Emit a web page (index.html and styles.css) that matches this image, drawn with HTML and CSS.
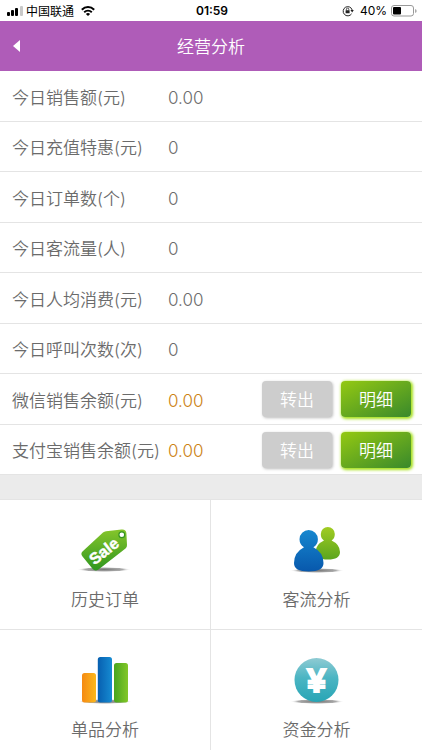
FILE: index.html
```html
<!DOCTYPE html>
<html lang="zh-CN">
<head>
<meta charset="UTF-8">
<meta name="viewport" content="width=device-width, initial-scale=1.0">
<title>经营分析</title>
<link rel="stylesheet" href="styles.css">
</head>
<body>
<!-- 状态栏 -->
<div class="status-bar">
  <div class="status-left">
    <svg class="signal" width="17" height="10" viewBox="0 0 17 10" aria-hidden="true">
      <rect x="0" y="6" width="3" height="4" rx="1"/>
      <rect x="4" y="4" width="3" height="6" rx="1"/>
      <rect x="8" y="2" width="3" height="8" rx="1"/>
      <rect x="13" y="0" width="3" height="10" rx="1" fill="#c8c8c8"/>
    </svg>
    <span>中国联通</span>
    <svg class="wifi" width="14" height="10" viewBox="0 0 14 10" fill="none" stroke="#000" stroke-width="2" aria-hidden="true">
      <path d="M.8 3.7C4.4.2 9.6.2 13.2 3.7"/>
      <path d="M3.2 6.2c2.2-2 5.4-2 7.6 0"/>
      <path d="M7 10 4.9 7.9q2.1-1.7 4.2 0z" fill="#000" stroke="none"/>
    </svg>
  </div>
  <div class="status-time">01:59</div>
  <div class="status-right">
    <svg width="12" height="12" viewBox="0 0 12 12" fill="none" stroke="#222" aria-hidden="true">
      <path d="M9.6 8.8A4.6 4.6 0 1 1 10.2 5"/>
      <path d="M8.4 5h3.4l-1.6 2.4z" fill="#222" stroke="none"/>
      <rect x="3.6" y="5.2" width="4" height="3.1" rx=".4" fill="#222" stroke="none"/>
      <path d="M4.4 5.4V4.3a1.2 1.2 0 0 1 2.4 0v1.1" stroke-width=".8"/>
    </svg>
    <span>40%</span>
    <svg width="26" height="12" viewBox="0 0 26 12" aria-hidden="true">
      <rect x=".5" y=".5" width="22" height="10.5" rx="2.5" fill="#fff" stroke="#999"/>
      <rect x="2" y="2" width="8" height="7.5" rx="1"/>
      <path d="M24.2 4v4q1.4-.6 1.4-2t-1.4-2z" fill="#999"/>
    </svg>
  </div>
</div>

<header class="title-bar">
  <a class="back" href="#" aria-label="返回">
    <svg width="7" height="12" viewBox="0 0 7 12" fill="#fff" aria-hidden="true"><path d="M7 0v12L0 6z"/></svg>
  </a>
  <h1>经营分析</h1>
</header>

<main>
  <!-- 今日数据 -->
  <table class="stats">
    <tbody>
      <tr><th scope="row">今日销售额(元)</th><td colspan="2">0.00</td></tr>
      <tr><th scope="row">今日充值特惠(元)</th><td colspan="2">0</td></tr>
      <tr><th scope="row">今日订单数(个)</th><td colspan="2">0</td></tr>
      <tr><th scope="row">今日客流量(人)</th><td colspan="2">0</td></tr>
      <tr><th scope="row">今日人均消费(元)</th><td colspan="2">0.00</td></tr>
      <tr><th scope="row">今日呼叫次数(次)</th><td colspan="2">0</td></tr>
      <tr>
        <th scope="row">微信销售余额(元)</th>
        <td class="balance">0.00</td>
        <td class="actions"><div class="btn-group"><button class="btn btn-out" type="button">转出</button><button class="btn btn-detail" type="button">明细</button></div></td>
      </tr>
      <tr>
        <th scope="row">支付宝销售余额(元)</th>
        <td class="balance">0.00</td>
        <td class="actions"><div class="btn-group"><button class="btn btn-out" type="button">转出</button><button class="btn btn-detail" type="button">明细</button></div></td>
      </tr>
    </tbody>
  </table>

  <!-- 功能入口 -->
  <nav class="menu">
    <a class="menu-item" href="#">
      <svg width="54" height="48" viewBox="0 0 54 48" aria-hidden="true">
        <defs>
          <linearGradient id="tag" x1="0" y1="0" x2="0" y2="1"><stop offset="0" stop-color="#85c52b"/><stop offset="1" stop-color="#2f961f"/></linearGradient>
          <radialGradient id="shadow"><stop offset="0" stop-color="#777"/><stop offset=".7" stop-color="#aaa"/><stop offset="1" stop-color="#fff" stop-opacity="0"/></radialGradient>
        </defs>
        <ellipse cx="26" cy="42.5" rx="27" ry="2.5" fill="url(#shadow)"/>
        <path d="M28 4.200 43.500 2.500q4.500-.4 4.900 3.700L49 18q.1 2-1.500 3.500L20.500 42.500q-3.500 2.400-6-.8L4.500 29.500q-2.500-3 .5-5.500L25 5.500q1.400-1.100 3-1.300z" fill="url(#tag)"/>
        <circle cx="43.800" cy="7.800" r="2.900" fill="#fff" stroke="#34951f" stroke-width="1.200"/>
        <text class="sale" x="26" y="29.500" text-anchor="middle" transform="rotate(-38 26 24)">Sale</text>
      </svg>
      <span>历史订单</span>
    </a>
    <a class="menu-item" href="#">
      <svg width="54" height="48" viewBox="0 0 54 48" aria-hidden="true">
        <defs>
          <linearGradient id="blue" x1="0" y1="0" x2="0" y2="1"><stop offset="0" stop-color="#1687cf"/><stop offset="1" stop-color="#0858ac"/></linearGradient>
          <linearGradient id="lime" x1="0" y1="0" x2="0" y2="1"><stop offset="0" stop-color="#a1cc22"/><stop offset="1" stop-color="#5ba51e"/></linearGradient>
        </defs>
        <ellipse cx="27" cy="43.500" rx="27" ry="2.500" fill="url(#shadow)"/>
        <path d="M34 13.500q-3.200-2-3.200-6.500a7 7 0 0 1 14 0q0 4.500-3.200 6.500 8.400 4 8.400 11.500 0 7.500-12.200 7.500T25.600 25q0-7.500 8.400-11.500z" fill="url(#lime)"/>
        <path d="M14 20.300q-4.500-3-4.500-8a9.200 9.200 0 0 1 18.400 0q0 5-4.500 8Q33.500 25.500 33.500 36q0 8.500-14.800 8.500T4 36q0-10.500 10-15.700z" fill="url(#blue)"/>
      </svg>
      <span>客流分析</span>
    </a>
    <a class="menu-item" href="#">
      <svg width="54" height="48" viewBox="0 0 54 48" aria-hidden="true">
        <defs>
          <linearGradient id="orange"><stop offset="0" stop-color="#f58a13"/><stop offset="1" stop-color="#fbb81c"/></linearGradient>
          <linearGradient id="bar-blue"><stop offset="0" stop-color="#075fb0"/><stop offset="1" stop-color="#168bd2"/></linearGradient>
          <linearGradient id="bar-green"><stop offset="0" stop-color="#48a51e"/><stop offset="1" stop-color="#83c728"/></linearGradient>
        </defs>
        <ellipse cx="27" cy="44.500" rx="27" ry="2.500" fill="url(#shadow)"/>
        <rect x="4" y="16" width="14" height="29.500" rx="2.500" fill="url(#orange)"/>
        <rect x="19.800" y="0" width="14.200" height="45.500" rx="2.500" fill="url(#bar-blue)"/>
        <rect x="36" y="6" width="14" height="39.500" rx="2.500" fill="url(#bar-green)"/>
      </svg>
      <span>单品分析</span>
    </a>
    <a class="menu-item" href="#">
      <svg width="54" height="48" viewBox="0 0 54 48" aria-hidden="true">
        <defs>
          <linearGradient id="teal" x1="0" y1="0" x2="0" y2="1"><stop offset="0" stop-color="#8fcbd3"/><stop offset=".45" stop-color="#4bb5c3"/><stop offset="1" stop-color="#28a5b5"/></linearGradient>
        </defs>
        <ellipse cx="27" cy="44.500" rx="27" ry="2.500" fill="url(#shadow)"/>
        <circle cx="26.500" cy="23" r="22" fill="url(#teal)"/>
        <text class="yen" x="26.500" y="34.500" text-anchor="middle">¥</text>
      </svg>
      <span>资金分析</span>
    </a>
  </nav>
</main>
</body>
</html>
```

FILE: styles.css
```css
:root {
  --font-body: "Noto Sans CJK SC", sans-serif;
  --font-num: Inter, "Noto Sans CJK SC", sans-serif;
  --color-main: #af5cb8;
  --color-text: #6b6b6b;
  --color-line: #e4e4e4;
}

* { box-sizing: border-box; }

body {
  margin: 0;
  min-height: 100vh;
  display: flex; flex-direction: column;
  font-family: var(--font-body);
  font-size: 17px; line-height: 24px; font-weight: 350;
  color: var(--color-text); background: #fff;
}

svg { display: block; overflow: visible; }

/* 状态栏 */
.status-bar {
  display: grid; grid-template-columns: 1fr auto 1fr; align-items: center;
  height: 21px; padding: 0 5px 0 7px;
  font-size: 12px; line-height: 20px; font-weight: 400;
  color: #000;
}
.status-left, .status-right {
  display: flex; align-items: center;
}
.status-left { gap: 2px; }
.wifi { margin-left: 5px; }
.status-right {
  justify-content: flex-end; gap: 4px;
  font-family: var(--font-num);
}
.status-right span { margin-left: 2px; }
.status-time {
  font-family: var(--font-num); font-weight: 600;
}

/* 标题栏 */
.title-bar {
  display: grid; grid-template-columns: 48px 1fr 48px; align-items: center;
  height: 50px;
  background: var(--color-main); color: #fff;
}
.title-bar h1 {
  margin: 0; text-align: center;
  font-size: 17px; font-weight: 350;
}
.back { padding: 12px 13px; }

main {
  flex: 1;
  display: flex; flex-direction: column;
}

/* 今日数据 */
.stats {
  width: 100%;
  border-spacing: 0;
}
.stats tr { height: 51px; }
.stats tr:nth-child(even) { height: 50px; }
.stats th, .stats td {
  padding: 3px 0 0; border-bottom: 1px solid var(--color-line);
  font-family: var(--font-num);
  text-align: left; font-weight: 350; white-space: nowrap;
}
.stats th {
  width: 168px; padding-left: 12px;
}
.stats .balance { color: #cc8213; }
.stats .actions { padding: 0 11px 0 0; }

.btn-group {
  display: flex; justify-content: flex-end; gap: 9px;
}
.btn {
  width: 70px; height: 36px; padding: 0;
  border: none; border-radius: 4px;
  font-family: var(--font-body); font-size: 17px; line-height: 24px; font-weight: 350;
  color: #fff; cursor: pointer;
}
.btn-out {
  background: #cdcdcd;
  box-shadow: 1px 1px 3px #bbb;
}
.btn-detail {
  background: linear-gradient(to bottom right, #94c912, #39892b);
  box-shadow: 1px 1px 3px 1px #a6e01c;
}

/* 功能入口 */
.menu {
  flex: 1;
  display: grid; grid-template-columns: 1fr 1fr; grid-template-rows: 130px 1fr;
  border-top: 24px solid #ebebeb;
}
.menu-item {
  display: flex; flex-direction: column; align-items: center; gap: 12px;
  padding-top: 27px;
  border-top: 1px solid var(--color-line);
  color: inherit; text-decoration: none;
}
.menu-item:nth-child(odd) { border-right: 1px solid var(--color-line); }

.sale {
  font: bold 16px "Liberation Sans", sans-serif;
  fill: #fff; stroke: #fff; stroke-width: 0.4px;
}
.yen {
  font: bold 34px "Liberation Sans", sans-serif;
  fill: #fff; stroke: #fff; stroke-width: 2px;
}
```
